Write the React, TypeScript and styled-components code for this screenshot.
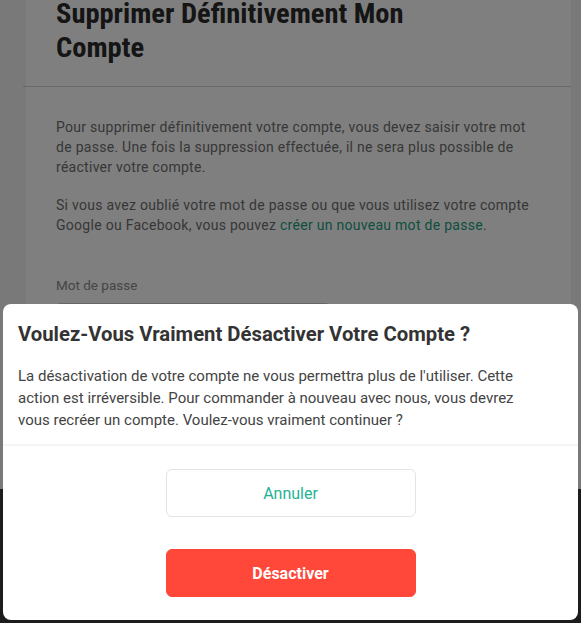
import React from "react";
import styled, { createGlobalStyle } from "styled-components";

const Global = createGlobalStyle`
  html, body { margin: 0; padding: 0; }
  body {
    background: #f3f3f3;
    font-family: Roboto, "Noto Sans", sans-serif;
    overflow: hidden;
  }
`;

const Page = styled.div`
  display: flex;
  flex-direction: column;
  min-height: 623px;
`;

const Card = styled.section`
  margin: -3px 10px 0 26px;
  background: #ffffff;
  display: flex;
  flex-direction: column;
`;

const CardHeader = styled.header`
  margin-left: -3px;
  padding: 0 30px 21px 33px;
  border-bottom: 1px solid #d2d2d2;
`;

const PageTitle = styled.h1`
  margin: 0;
  font-family: "Liberation Sans Narrow", "Roboto Condensed", "Liberation Sans", sans-serif;
  font-weight: 700;
  font-size: 28.5px;
  line-height: 34px;
  color: #2a2a2a;
`;

const CardBody = styled.div`
  padding: 30px 30px 0;
  height: 372px;
  display: flex;
  flex-direction: column;
`;

const Para = styled.p`
  margin: 0 0 18px;
  font-size: 14px;
  letter-spacing: 0.28px;
  line-height: 20px;
  color: #6e6e6e;
`;

const Link = styled.a`
  color: #1a9d7c;
  text-decoration: none;
`;

const Label = styled.label`
  margin-top: 22px;
  font-size: 13.5px;
  line-height: 20px;
  color: #8a8a8a;
`;

const Input = styled.div`
  margin-top: 8px;
  width: 272px;
  height: 40px;
  border: 1px solid #cfcfcf;
  border-radius: 4px;
`;

const Footer = styled.footer`
  flex: 1;
  background: #383838;
`;

const Overlay = styled.div`
  position: fixed;
  inset: 0;
  background: rgba(0, 0, 0, 0.5);
`;

const Modal = styled.div`
  position: fixed;
  left: 3px;
  right: 3px;
  bottom: 3px;
  background: #ffffff;
  border-radius: 8px;
  display: flex;
  flex-direction: column;
  color: #333333;
`;

const ModalHeader = styled.div`
  padding: 16px 15px 13px;
  border-bottom: 2px solid #f4f4f4;
`;

const ModalTitle = styled.h2`
  margin: 0 0 17px;
  font-family: Roboto, sans-serif;
  font-weight: 700;
  font-size: 20.3px;
  line-height: 28px;
  color: #333333;
`;

const ModalText = styled.p`
  margin: 0;
  max-width: 515px;
  font-size: 15px;
  line-height: 22px;
  color: #444444;
`;

const Actions = styled.div`
  display: flex;
  flex-direction: column;
  align-items: center;
  gap: 32px;
  padding: 23px 0 23px;
`;

const Button = styled.button<{ $variant: "ghost" | "danger" }>`
  width: 250px;
  height: 48px;
  border-radius: 6px;
  font-family: Roboto, sans-serif;
  font-size: 16px;
  cursor: pointer;
  border: 1px solid ${(p) => (p.$variant === "ghost" ? "#e4e4e4" : "#ff473a")};
  background: ${(p) => (p.$variant === "ghost" ? "#ffffff" : "#ff473a")};
  color: ${(p) => (p.$variant === "ghost" ? "#1fb394" : "#ffffff")};
  font-weight: ${(p) => (p.$variant === "ghost" ? 400 : 700)};
`;

export default function App() {
  return (
    <>
      <Global />
      <Page>
        <Card>
          <CardHeader>
            <PageTitle>
              Supprimer Définitivement Mon
              <br />
              Compte
            </PageTitle>
          </CardHeader>
          <CardBody>
            <Para>
              Pour supprimer définitivement votre compte, vous devez saisir votre mot de passe. Une
              fois la suppression effectuée, il ne sera plus possible de réactiver votre compte.
            </Para>
            <Para>
              Si vous avez oublié votre mot de passe ou que vous utilisez votre compte Google ou
              Facebook, vous pouvez <Link href="#">créer un nouveau mot de passe</Link>.
            </Para>
            <Label>Mot de passe</Label>
            <Input />
          </CardBody>
        </Card>
        <Footer />
      </Page>
      <Overlay />
      <Modal>
        <ModalHeader>
          <ModalTitle>Voulez-Vous Vraiment Désactiver Votre Compte ?</ModalTitle>
          <ModalText>
            La désactivation de votre compte ne vous permettra plus de l'utiliser. Cette action est
            irréversible. Pour commander à nouveau avec nous, vous devrez vous recréer un compte.
            Voulez-vous vraiment continuer ?
          </ModalText>
        </ModalHeader>
        <Actions>
          <Button $variant="ghost">Annuler</Button>
          <Button $variant="danger">Désactiver</Button>
        </Actions>
      </Modal>
    </>
  );
}
